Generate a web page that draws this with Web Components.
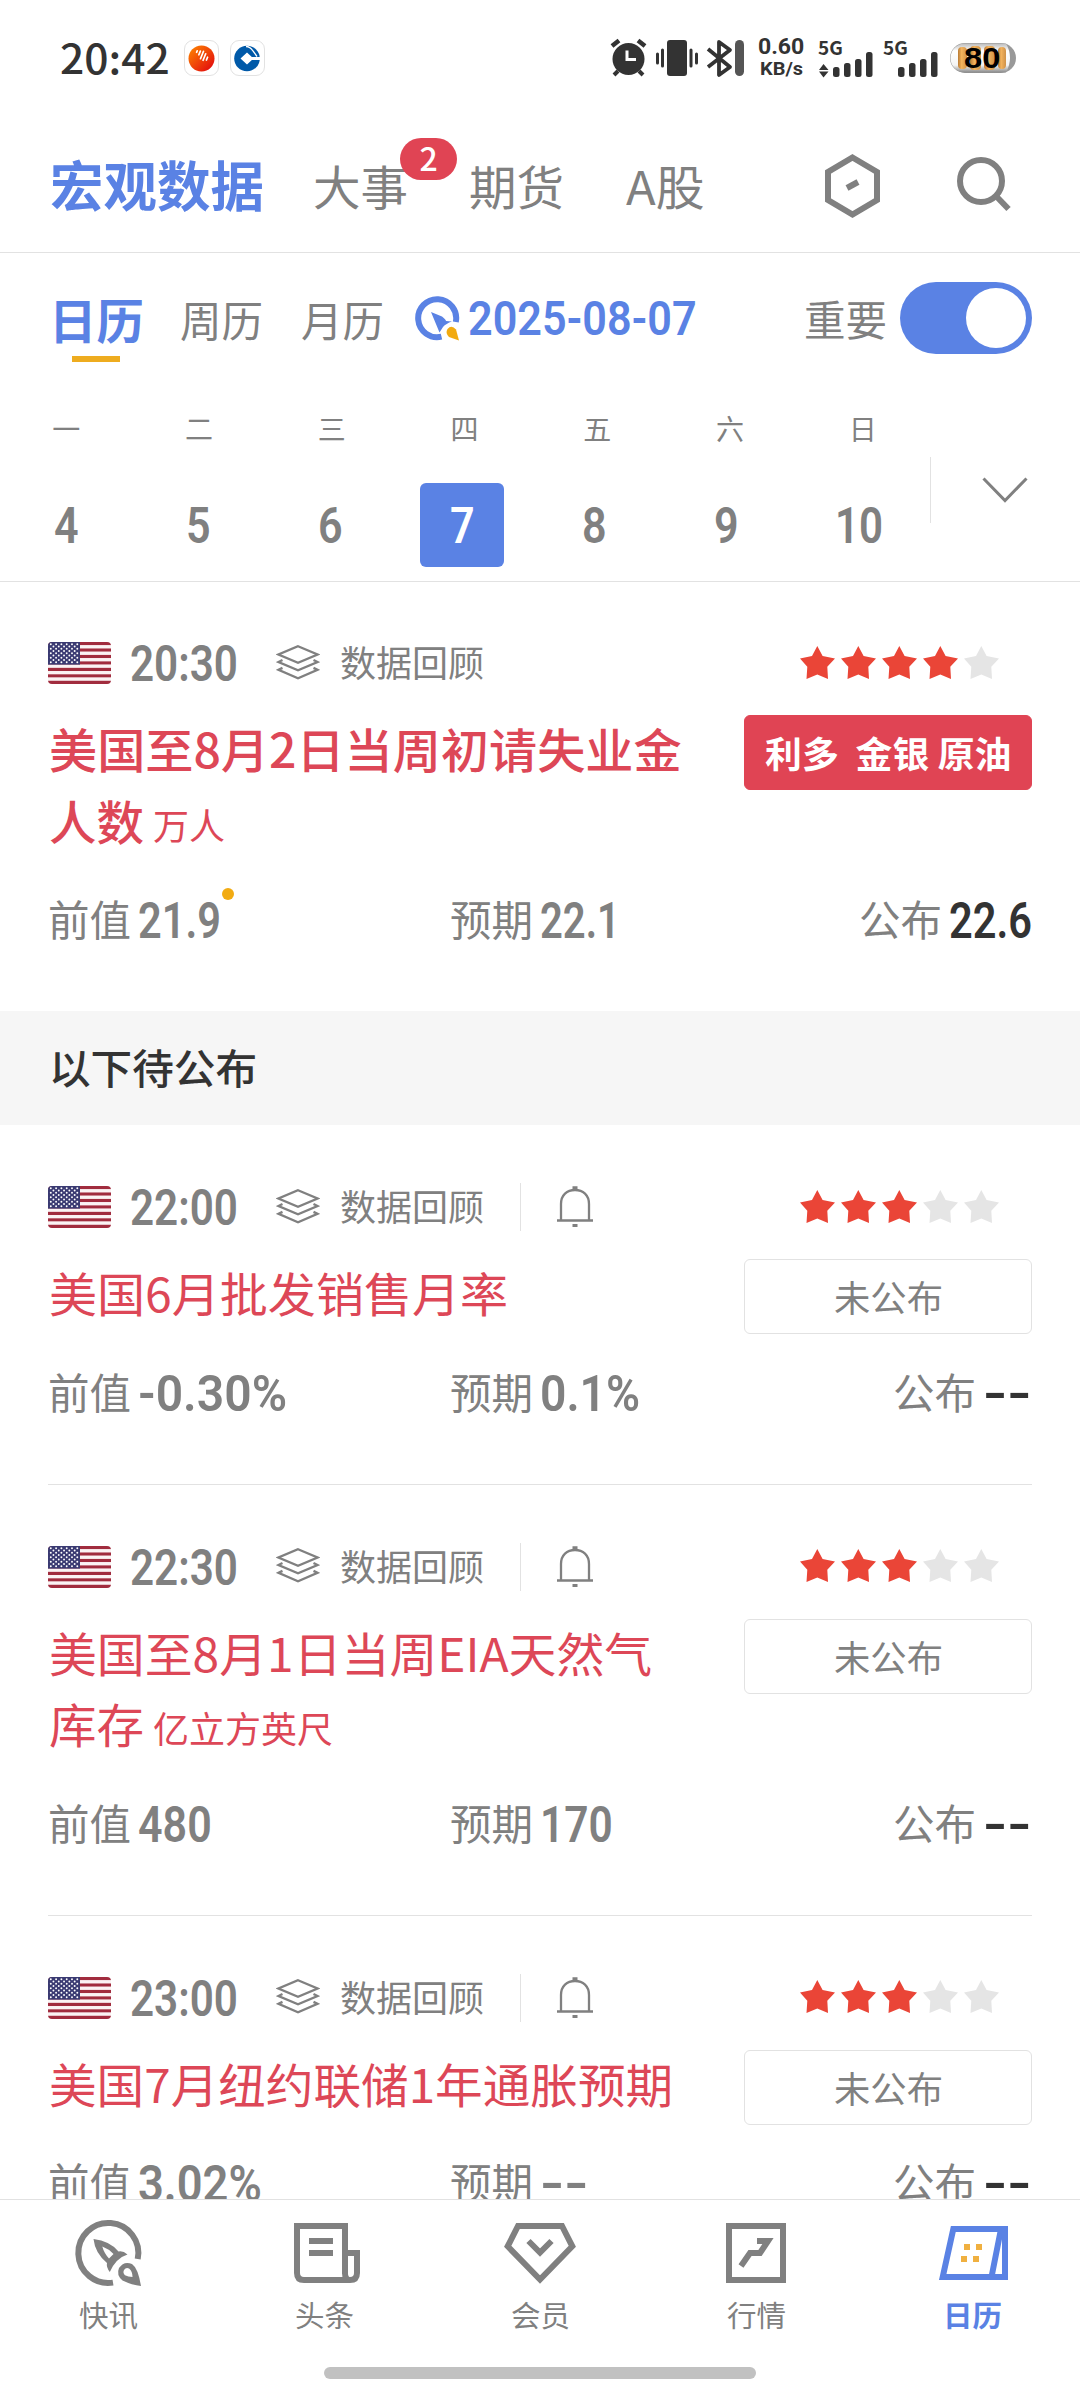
<!DOCTYPE html>
<html lang="zh-CN">
<head>
<meta charset="utf-8">
<title>日历</title>
<style>
html,body{margin:0;padding:0;background:#fff}
body{width:1080px;height:2400px;overflow:hidden;font-family:"Noto Sans CJK SC",sans-serif;color:#808080}
</style>
</head>
<body>
<calendar-app></calendar-app>
<script>
/* Text run stretched or squeezed horizontally to a set width */
class FitText extends HTMLElement{
  connectedCallback(){
    const r=this.attachShadow({mode:'open'});
    r.innerHTML=`<style>
      :host{display:inline-block;white-space:nowrap;line-height:1;text-align:left;flex:none}
      :host([num]){font-family:Roboto,"Noto Sans CJK SC",sans-serif;font-weight:600;--dy:.02em}
      span{display:inline-block;white-space:pre;transform-origin:0 0;transform:translateY(var(--dy,-.055em)) scaleX(var(--sx,1))}
    </style><span><slot></slot></span>`;
    const w=+this.getAttribute('w');
    if(w){
      const n=r.querySelector('span').offsetWidth;
      this.style.width=w+'px';
      if(n)this.style.setProperty('--sx',w/n);
    }
  }
}
customElements.define('fit-text',FitText);

const define=(name,html)=>customElements.define(name,class extends HTMLElement{
  connectedCallback(){
    if(this.shadowRoot)return;
    this.attachShadow({mode:'open'}).innerHTML=typeof html==='function'?html(this):html;
  }
});

define('status-bar',`<style>
:host{display:flex;height:116px;align-items:center;box-sizing:border-box;padding:0 64px 0 60px;color:#333;position:relative}
.app{width:33px;height:34px;border:1px solid #e2e2e2;border-radius:9px;margin-left:11px;display:block}
.app:first-of-type{margin-left:14px}
.right{margin-left:auto;display:flex;align-items:center;height:40px}
svg{display:block;flex:none}
.rate{display:flex;flex-direction:column;align-items:center;gap:1px;font-family:Roboto,sans-serif;font-weight:700;width:46px;margin:-2px 0 0 14px;--dy:0}
.sig{display:flex;flex-direction:column;width:56px;height:40px;position:relative}
.sig fit-text{font-size:19px;font-weight:700}
.sig svg{position:absolute;left:0;top:0}
.bat{position:relative;width:66px;height:30px;margin-left:11px}
.bat fit-text{position:absolute;left:14px;top:1px;font:700 29px/1 "Liberation Sans",sans-serif;color:#000;--dy:0}
</style>
<fit-text w="110" style="font-size:41px;font-weight:500">20:42</fit-text>
<svg class="app" viewBox="0 0 33 34"><defs><linearGradient id="g" x1="0" y1="0" x2="1" y2="1"><stop offset="0" stop-color="#ff8a00"/><stop offset="1" stop-color="#e00010"/></linearGradient></defs><circle cx="16.500" cy="17.500" r="13" fill="url(#g)"/><path d="M11 12v1.500M14 11v4M17 10v8M20 11.500v7M23 14v3" stroke="#fff" stroke-width="1.700" stroke-linecap="round" transform="rotate(22 17 14)"/></svg>
<svg class="app" viewBox="0 0 33 34"><circle cx="16" cy="17.500" r="12.800" fill="#0059a8"/><path d="M16 11.500l6.500 6-6.500 6-6.500-6zM21 16h9v3h-9z" fill="#fff"/><path d="M15 5.500q4 0 7 4.500l4 5.500" stroke="#fff" stroke-width="1.300" fill="none"/></svg>
<div class="right">
<svg width="134" height="40" viewBox="0 0 134 40"><g fill="#333" stroke="#333">
<circle cx="18.500" cy="21" r="16" stroke="none"/><path d="M2 8l7-5.500M35 8l-7-5.500" stroke-width="4.500"/><path d="M4 37l4-4M33 37l-4-4" stroke-width="4"/><path d="M17 12.500v9h9" fill="none" stroke="#fff" stroke-width="3"/>
<rect x="57" y="2" width="20" height="36" rx="3" stroke="none"/><path d="M47.500 16v9M52.500 12v16M81 12v16M86.500 16v9" stroke-width="3" stroke-linecap="round"/>
<path d="M98 11l22 18-11 8V4l11 8-22 17" fill="none" stroke-width="3.800" stroke-linejoin="round"/></g><rect x="125" y="2" width="9" height="36" rx="4.500" fill="#555"/></svg>
<div class="rate"><fit-text w="46" style="font-size:22px">0.60</fit-text><fit-text w="43" style="font-size:19px">KB/s</fit-text></div>
<div class="sig" style="margin-left:14px"><fit-text w="25">5G</fit-text><svg width="56" height="40" viewBox="0 0 56 40" fill="#333"><path d="M5.500 26l5 6H1zM5.500 39.500l5-6H1z"/><rect x="15" y="29" width="6.500" height="10" rx="2.500"/><rect x="26" y="25" width="6.500" height="14" rx="2.500"/><rect x="37" y="21" width="6.500" height="18" rx="2.500"/><rect x="48" y="14" width="6.500" height="25" rx="2.500"/></svg></div>
<div class="sig" style="margin-left:9px"><fit-text w="25">5G</fit-text><svg width="56" height="40" viewBox="0 0 56 40" fill="#333"><rect x="15" y="29" width="6.500" height="10" rx="2.500"/><rect x="26" y="25" width="6.500" height="14" rx="2.500"/><rect x="37" y="21" width="6.500" height="18" rx="2.500"/><rect x="48" y="14" width="6.500" height="25" rx="2.500"/></svg></div>
<div class="bat"><svg width="66" height="30" viewBox="0 0 66 30"><defs><linearGradient id="b" x1="0" y1="0" x2="0" y2="1"><stop offset="0" stop-color="#bbb"/><stop offset=".25" stop-color="#fff"/><stop offset=".75" stop-color="#f4f4f4"/><stop offset="1" stop-color="#888"/></linearGradient><linearGradient id="o"><stop offset="0" stop-color="#b87a34"/><stop offset=".4" stop-color="#f3b35d"/><stop offset="1" stop-color="#cf9148"/></linearGradient></defs><rect width="66" height="30" rx="15" fill="#999"/><path d="M15 .5h41q8 14 0 29H15A14.500 14.500 0 0 1 15 .5z" fill="url(#b)"/><g fill="url(#o)"><rect x="8" y="4" width="9" height="22" rx="4"/><rect x="20" y="3" width="11" height="24" rx="4"/><rect x="34" y="3" width="11" height="24" rx="4"/><rect x="48" y="4" width="8" height="22" rx="4"/></g></svg><fit-text w="36">80</fit-text></div>
</div>`);

define('top-nav',`<style>
:host{display:flex;height:137px;box-sizing:border-box;border-bottom:1px solid #e2e2e2;align-items:center;padding:7px 69px 0 50px}
fit-text{font-size:47px}
.on{font-size:54px;font-weight:700;color:#5a82e4;margin-top:-1px}
.wrap{position:relative;margin-left:49px;display:flex}
.badge{position:absolute;left:87px;top:-26px;width:57px;height:42px;border-radius:21px;background:#e04454;color:#fff;display:flex;align-items:center;justify-content:center}
.badge fit-text{font-size:32px;font-weight:500}
.ic{margin:-3px 0 0 auto;display:flex;gap:77px;align-items:center}
svg{display:block}
</style>
<fit-text class="on" w="214">宏观数据</fit-text>
<div class="wrap"><fit-text w="95">大事</fit-text><span class="badge"><fit-text>2</fit-text></span></div>
<fit-text w="95" style="margin-left:61px">期货</fit-text>
<fit-text w="79" style="margin-left:62px">A股</fit-text>
<div class="ic"><svg width="55" height="64" viewBox="0 0 55 64" fill="none" stroke="#808080" stroke-width="6"><path d="M27.500 3.500L52 18v28L27.500 60.500 3 46V18z"/><path d="M22 34l11-6"/></svg>
<svg width="54" height="56" viewBox="0 0 54 56" fill="none" stroke="#808080" stroke-width="6" style="margin-top:-4px"><circle cx="24" cy="25" r="21"/><path d="M39 40l12.500 13"/></svg></div>`);

define('view-tabs',`<style>
:host{display:flex;height:130px;align-items:center;box-sizing:border-box;padding:6px 48px 0 49px}
fit-text{font-size:42px}
.on{position:relative;display:flex;color:#5a82e4}
.on fit-text{font-size:48px;font-weight:700}
.on i{position:absolute;left:23px;top:59px;width:48px;height:6px;background:#eeac1f}
.date{color:#5a82e4;font-size:48px;margin-left:8px}
.tg{width:132px;height:72px;border-radius:36px;background:#5a82e4;margin:-6px 0 0 13px;display:flex;align-items:center;justify-content:flex-end;padding-right:6px;box-sizing:border-box}
.tg b{width:60px;height:60px;border-radius:50%;background:#fff}
</style>
<div class="on"><fit-text w="95">日历</fit-text><i></i></div>
<fit-text w="83" style="margin-left:36px">周历</fit-text>
<fit-text w="83" style="margin-left:38px">月历</fit-text>
<svg width="45" height="45" viewBox="0 0 45 45" style="margin:-6px 0 0 31px;display:block"><path d="M40.800 26A19 19 0 1 0 26.500 40.700" fill="none" stroke="#5a82e4" stroke-width="6"/><path d="M16 16l11 4.500q4 3 4 4.500l6 .6q-6 2-9 5.500l-3.500 5.500-2.500-6z" fill="#5a82e4"/><path d="M44 44.500l-10-3.500q-4-4-1.500-8 4-4.500 8.500 .5z" fill="#f2aa10"/></svg>
<fit-text num class="date" w="229" style="margin-top:-6px">2025-08-07</fit-text>
<fit-text w="83" style="margin:-2px 0 0 auto">重要</fit-text>
<div class="tg"><b></b></div>`);

define('week-strip',()=>`<style>
:host{display:flex;height:199px;box-sizing:border-box;border-bottom:1px solid #e2e2e2}
.days{display:grid;grid-template-columns:repeat(7,132.4px)}
.d{display:flex;flex-direction:column;align-items:center}
.l{height:94px;display:flex;align-items:center;font-size:28px}
.n{width:84px;height:84px;border-radius:6px;display:flex;align-items:center;justify-content:center;margin-top:6px;font-size:50px;--dy:.03em}
.on{background:#5a82e4;color:#fff}
.more{border-left:1px solid #e2e2e2;height:66px;margin:74px 0 0 3px;flex:1;display:flex;align-items:center;padding-left:51px;box-sizing:border-box}
</style><div class="days">${[['一',4],['二',5],['三',6],['四',7],['五',8],['六',9],['日',10]].map(([a,b],i)=>`<div class="d"><div class="l" style="margin-left:${i*.7}px"><fit-text>${a}</fit-text></div><div class="n${b===7?' on':''}" style="margin-left:-${i*.6}px"><fit-text num w="${b>9?48:25}">${b}</fit-text></div></div>`).join('')}</div>
<div class="more"><svg width="46" height="26" viewBox="0 0 46 26" fill="none" stroke="#808080" stroke-width="3"><path d="M1.500 1.500L23 23.500 44.500 1.500"/></svg></div>`);

define('us-flag',()=>{
  let s='';
  for(let i=0;i<13;i++)s+=`<rect y="${i*42/13}" width="63" height="${42/13+.1}" fill="${i%2?'#fbf3f4':'#a12c3e'}"/>`;
  s+='<rect width="32" height="22.600" fill="#3a3a72"/>';
  for(let y=0;y<9;y++)for(let x=0;x<(y%2?5:6);x++)s+=`<circle cx="${2.8+x*5.3+(y%2?2.65:0)}" cy="${2.3+y*2.25}" r=".95" fill="#fff"/>`;
  return `<style>:host{display:block;width:63px;height:42px;border-radius:4px;overflow:hidden}svg{display:block}</style><svg width="63" height="42">${s}</svg>`;
});

define('star-rating',el=>`<style>:host{display:flex;gap:6px}svg{display:block}</style>${[1,2,3,4,5].map(i=>`<svg width="35" height="33" viewBox="0 0 35 33"><path d="M17.300 0L22.600 9.900 35 12.500 27.300 20.800 28 33 17.300 28.600 6.500 33 7.300 20.800 0 12.500 12 9.900z" fill="${i<=+el.getAttribute('value')?'#ea4537':'#e5e5e5'}"/></svg>`).join('')}`);

define('event-item',el=>{
  const a=n=>el.getAttribute(n), pend=!el.hasAttribute('done');
  const val=(l,v,w,c)=>`<fit-text class="lb" w="83">${l}</fit-text><fit-text num class="v ${c||''}" w="${w}">${v}</fit-text>`;
  return `<style>
:host{display:block;box-sizing:border-box;padding:52px 48px 0}
.head{display:flex;height:60px;align-items:center}
.time{font-size:50px;margin-left:19px}
.lay{margin:-2px 0 0 38px;display:block}
.rev{font-size:36px;margin-left:20px}
.bar{width:1px;height:48px;background:#e2e2e2;margin-left:36px}
.bell{margin:-1px 0 0 36px;display:block}
star-rating{margin:-2px 33px 0 auto}
.body{display:flex;justify-content:space-between;align-items:flex-start}
.title{margin-top:22px;padding-left:1px;color:#dd4757;font-size:47px;font-weight:${pend?400:500}}
.ln{height:71.500px;display:flex;align-items:center}
.unit{font-size:36px;font-weight:400;margin:7px 0 0 9px}
.btn{width:288px;height:75px;margin:22px 0 -4px;box-sizing:border-box;border:1px solid #e2e2e2;border-radius:6px;display:flex;align-items:center;justify-content:center;font-size:36px;padding-top:3px}
.btn.up{background:#e04454;border-color:#e04454;color:#fff;font-weight:700}
.vals{display:grid;grid-template-columns:401px 1fr auto;height:60px;margin-top:32px}
.c{display:flex;align-items:center;position:relative}
.c:nth-child(2){padding-left:1px}
.lb{font-size:42px}.v{font-size:50px;margin-left:7px}
.dark{color:#333}
.dot{position:absolute;left:174px;top:-2px;width:12px;height:12px;border-radius:50%;background:#f2ab12}
.end{height:61px;border-bottom:1px solid ${a('last')!==null||!pend?'transparent':'#e2e2e2'}}
</style>
<div class="head"><us-flag></us-flag><fit-text num class="time" w="108">${a('time')}</fit-text>
<svg class="lay" width="44" height="35" viewBox="0 0 44 35" fill="none" stroke="#808080" stroke-width="2.300"><path d="M22 1.200L41.500 9.500 22 17.800 2.500 9.500z"/><path d="M6.500 15L2.500 17l19.500 8.300L41.500 17l-4-2M6.500 22.900L2.500 24.900 22 33.200l19.500-8.300-4-2"/></svg>
<fit-text class="rev" w="144">数据回顾</fit-text>
${pend?`<i class="bar"></i><svg class="bell" width="36" height="41" viewBox="0 0 36 41" fill="none" stroke="#808080" stroke-width="2.300"><path d="M4 34V18C4 9 10 4 18 4s14 5 14 14v16M0 34.500h36"/><path d="M15.500 1.700h5M15.500 39.500h5" stroke-width="2.800"/></svg>`:''}
<star-rating value="${a('stars')}"></star-rating></div>
<div class="body"><div class="title"><div class="ln"><fit-text w="${a('tw')}">${a('title')}</fit-text></div>${a('title2')?`<div class="ln"><fit-text w="95">${a('title2')}</fit-text><fit-text class="unit">${a('unit')}</fit-text></div>`:''}</div>
${pend?'<div class="btn"><fit-text w="109">未公布</fit-text></div>':'<div class="btn up"><fit-text w="247">利多&nbsp; 金银 原油</fit-text></div>'}</div>
<div class="vals"><div class="c">${val('前值',a('prev'),a('pw'))}${pend?'':'<i class="dot"></i>'}</div><div class="c">${val('预期',a('exp'),a('ew'))}</div><div class="c">${val('公布',a('act'),a('aw'),'dark')}</div></div>
<div class="end"></div>`;
});

define('section-title',`<style>:host{display:flex;height:114px;background:#f6f6f6;align-items:center;padding-left:49px;color:#333;font-size:41px;font-weight:500}</style><fit-text w="208"><slot></slot></fit-text>`);

define('tab-bar',()=>{
  const I=[
  ['快讯',66,66,'<path d="M62.700 39A30 30 0 1 0 38 62.600" stroke-width="6"/><path fill="#808080" stroke="none" fill-rule="evenodd" d="M18.500 19Q35 21 43.500 31.500 48 30.500 52.500 34.500 41 38 34.800 52 31 47 32 43 20 33 18.500 19zM27.300 26.500Q29 33 34 38.500L38.500 34Q34 29 27.300 26.500z"/><path fill="#808080" stroke="none" fill-rule="evenodd" d="M66 66Q57 65 47.500 60.500 41 55 44 48 49 40.500 57 44 63 48 66 66zM57.500 57Q57.500 51 54 48.500 51 47 49 50 47.500 53 50 55.200 53 57 57.500 57z"/>',0],
  ['头条',66,60,'<path stroke-width="6" d="M51 51V3H3v47q0 7 7 7h46q7 0 7-7V30H51M51 50q0 6 4 7M15 18h24M15 30h24"/>',6],
  ['会员',72,60,'<path stroke-width="6" d="M14 3H58L68.300 23.300 36 56.500 3.700 23.300z"/><path stroke-width="6" d="M24.500 18L36 29.500 47.500 18"/>',0],
  ['行情',60,60,'<path stroke-width="6" d="M3 3h54v54H3zM15 43l9-13h10l8-12H31"/>',0],
  ['日历',69,54,'<path stroke-width="6" d="M14.300 3H66V51H3.700zM62 3L52.500 51"/><path d="M25 18h6v6h-6zM37 18h6v6h-6zM22 30h6v6h-6zM34 30h6v6h-6z" fill="#f0b040" stroke="none"/>',3]];
  return `<style>
:host{display:block;height:201px;box-sizing:border-box;border-top:1px solid #e2e2e2;background:#fff}
.g{display:grid;grid-template-columns:repeat(5,216px)}
.t{display:flex;flex-direction:column;align-items:center;color:#808080;font-size:29px}
.i{height:66px;margin-top:20px;display:flex;align-items:center}
.t fit-text{margin-top:16px}
.t svg{display:block;fill:none;stroke:currentColor;overflow:visible}
.on{color:#5a82e4;font-weight:700}
.home{width:432px;height:12px;border-radius:6px;background:#c1c1c1;margin:36px auto 0}
</style><div class="g">${I.map(([n,w,h,p,s],k)=>`<div class="t${k===4?' on':''}"><div class="i" style="padding-left:${s}px"><svg width="${w}" height="${h}" viewBox="0 0 ${w} ${h}">${p}</svg></div><fit-text w="59">${n}</fit-text></div>`).join('')}</div><div class="home"></div>`;
});

define('calendar-app',`<style>
:host{display:flex;flex-direction:column;width:1080px;height:2400px;background:#fff}
.list{flex:1;min-height:0;overflow:hidden}
</style>
<status-bar></status-bar><top-nav></top-nav><view-tabs></view-tabs><week-strip></week-strip>
<div class="list">
<event-item done style="margin-top:-1px;height:430px" time="20:30" stars="4" title="美国至8月2日当周初请失业金" tw="633" title2="人数" unit="万人" prev="21.9" pw="83" exp="22.1" ew="80" act="22.6" aw="83"></event-item>
<section-title>以下待公布</section-title>
<event-item time="22:00" stars="3" title="美国6月批发销售月率" tw="459" prev="-0.30%" pw="149" exp="0.1%" ew="100" act="--" aw="49"></event-item>
<event-item time="22:30" stars="3" title="美国至8月1日当周EIA天然气" tw="603" title2="库存" unit="亿立方英尺" prev="480" pw="74" exp="170" ew="73" act="--" aw="49"></event-item>
<event-item last time="23:00" stars="3" title="美国7月纽约联储1年通胀预期" tw="624" prev="3.02%" pw="124" exp="--" ew="49" act="--" aw="49"></event-item>
</div>
<tab-bar></tab-bar>`);
</script>
</body>
</html>
